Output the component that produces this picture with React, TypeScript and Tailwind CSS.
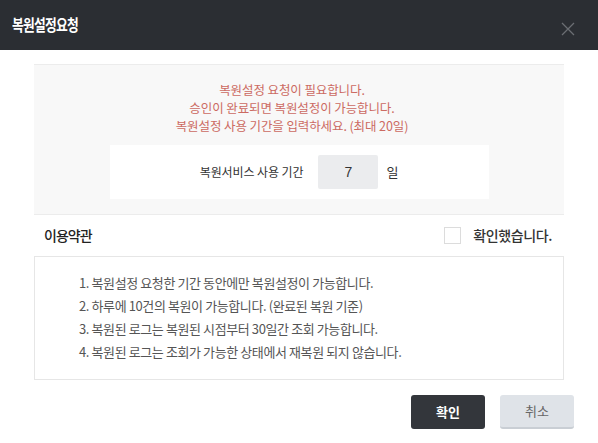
import { useState } from 'react';

const terms = [
  '1. 복원설정 요청한 기간 동안에만 복원설정이 가능합니다.',
  '2. 하루에 10건의 복원이 가능합니다. (완료된 복원 기준)',
  '3. 복원된 로그는 복원된 시점부터 30일간 조회 가능합니다.',
  '4. 복원된 로그는 조회가 가능한 상태에서 재복원 되지 않습니다.',
];

const RestoreRequestModal = () => {
  const [days, setDays] = useState('7');
  const [agreed, setAgreed] = useState(false);

  return (
    <div
      className="w-[598px] h-[443px] bg-white flex flex-col"
      style={{ fontFamily: '"Noto Sans CJK KR", "Noto Sans", sans-serif' }}
    >
      {/* header */}
      <div className="h-[50px] bg-[#2b2e33] flex items-start justify-between pl-3 pr-[23px] shrink-0">
        <h1 className="text-white text-[16px] font-bold tracking-[-1px] leading-none mt-[16px] scale-x-[0.8] origin-left">복원설정요청</h1>
        <button className="mt-[22px] text-[#6b6e73]" aria-label="닫기">
          <svg width="14" height="14" viewBox="0 0 14 14" fill="none" stroke="currentColor" strokeWidth="1.3">
            <path d="M1 1 L13 13 M13 1 L1 13" />
          </svg>
        </button>
      </div>

      <div className="px-[34px] pt-[14px] flex flex-col">
        {/* notice */}
        <div className="bg-[#f8f8f8] border-y border-[#ececec] h-[151px] flex flex-col items-center pt-[16px]">
          <div className="text-[#cc6a62] text-[12.5px] leading-[18px] tracking-[-0.1px] text-center pr-[14px]">
            <p>복원설정 요청이 필요합니다.</p>
            <p>승인이 완료되면 복원설정이 가능합니다.</p>
            <p>복원설정 사용 기간을 입력하세요. (최대 20일)</p>
          </div>
          <div className="mt-[10px] w-[379px] h-[54px] bg-white flex items-center justify-center text-[12px] text-[#333] tracking-[-0.1px]">
            <span>복원서비스 사용 기간</span>
            <input
              value={days}
              onChange={(e) => setDays(e.target.value)}
              className="ml-[15px] w-[60px] h-[34px] bg-[#ebecee] rounded-[2px] text-center text-[14px] text-[#333] outline-none"
              style={{ fontFamily: '"Liberation Sans", sans-serif' }}
            />
            <span className="ml-[8px] text-[13px]">일</span>
          </div>
        </div>

        {/* terms header */}
        <div className="h-[41px] flex items-center justify-between pl-[10px] pr-[12px]">
          <span className="text-[14px] font-medium text-[#222] tracking-[-1px]">이용약관</span>
          <label className="flex items-center gap-[12px] cursor-pointer">
            <span
              onClick={() => setAgreed(!agreed)}
              className="w-[17px] h-[17px] border border-[#dcdcdc] bg-white"
            />
            <span className="text-[14px] font-medium text-[#333] tracking-[-0.4px]">확인했습니다.</span>
          </label>
        </div>

        {/* terms */}
        <div className="h-[124px] border border-[#e6e6e6] pl-[44px] pt-[14px]">
          {terms.map((t) => (
            <p key={t} className="text-[13px] leading-[23px] text-[#555] tracking-[-0.4px]">{t}</p>
          ))}
        </div>

        {/* buttons */}
        <div className="flex justify-end gap-[15px] mt-[15px] -mr-[10px]">
          <button className="w-[74px] h-[34px] rounded-[3px] bg-[#33363b] text-white text-[13px] font-bold">확인</button>
          <button className="w-[74px] h-[34px] rounded-[3px] bg-[#dfe3e8] border-b-2 border-[#c9ced4] text-[#666] text-[13px]">취소</button>
        </div>
      </div>
    </div>
  );
};

export default function App() {
  return <RestoreRequestModal />;
}
